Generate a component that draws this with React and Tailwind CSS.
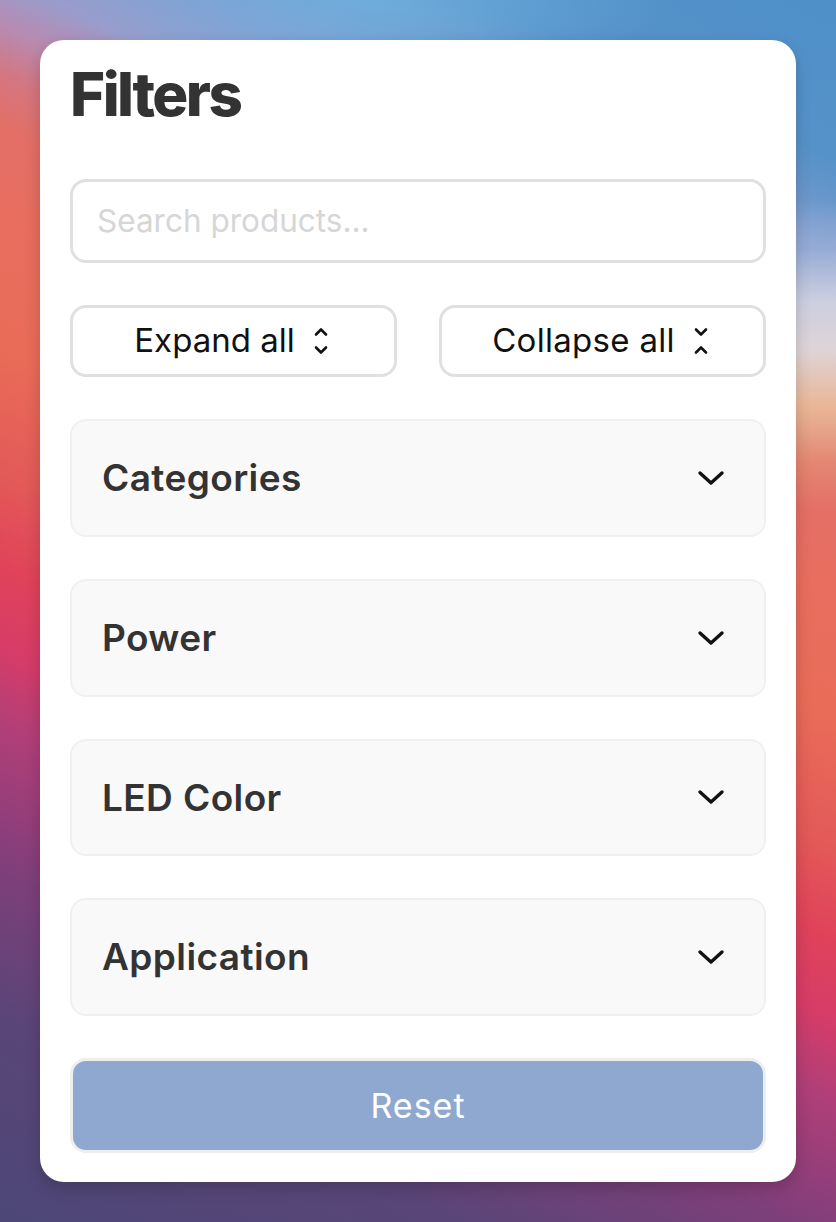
import React from "react";

function UpDown() {
  return (
    <svg width="24" height="30" viewBox="0 0 24 30" fill="none" stroke="#111" strokeWidth="2.6" strokeLinecap="round" strokeLinejoin="round">
      <path d="M7 8.5 L12 3.5 L17 8.5" />
      <path d="M7 21.5 L12 26.5 L17 21.5" />
    </svg>
  );
}

function DownUp() {
  return (
    <svg width="24" height="30" viewBox="0 0 24 30" fill="none" stroke="#111" strokeWidth="2.6" strokeLinecap="round" strokeLinejoin="round">
      <path d="M7 3.5 L12 8.5 L17 3.5" />
      <path d="M7 26.5 L12 21.5 L17 26.5" />
    </svg>
  );
}

function ChevronDown() {
  return (
    <svg width="28" height="18" viewBox="0 0 28 18" fill="none" stroke="#111" strokeWidth="3.4" strokeLinecap="round" strokeLinejoin="round">
      <path d="M3 4 L14 14 L25 4" />
    </svg>
  );
}

function Item({ label }) {
  return (
    <div className="mt-[42px] h-[118px] flex items-center justify-between bg-[#f9f9f9] border-2 border-[#f0f0f0] rounded-[16px] pl-[30px] pr-[39px]">
      <span className="text-[37px] font-semibold text-[#333333] tracking-[0.4px]">{label}</span>
      <ChevronDown />
    </div>
  );
}

export default function App() {
  return (
    <div
      className="w-[836px] h-[1222px] pt-[40px] px-[40px] font-['Inter',sans-serif]"
      style={{
        background: [
          "radial-gradient(ellipse 300px 90px at 370px 0px, rgba(112,178,224,0.8), rgba(112,178,224,0) 100%)",
          "linear-gradient(180deg, rgba(150,170,214,0) 200px, rgba(160,178,216,0.7) 250px, rgba(204,206,224,1) 300px, rgba(222,212,214,1) 350px, rgba(234,180,146,1) 410px, rgba(234,150,112,0.6) 460px, rgba(234,130,96,0) 510px) right top / 240px 100% no-repeat",
          "linear-gradient(204deg, #4f90c8 0%, #5592c8 10%, #7e9ccf 16%, #9a9ccc 22%, #b88ab0 25%, #d47680 28%, #e27068 31%, #e86e60 36%, #e96c58 45%, #e35a58 53%, #e0425a 59%, #d63c68 64%, #b03f78 69%, #953e7a 74%, #7d3f7a 78%, #5a4578 87%, #4c4777 100%)",
        ].join(", "),
      }}
    >
      <div className="w-[756px] h-[1142px] bg-white rounded-[24px] shadow-[0_6px_16px_rgba(0,0,0,0.18)] px-[30px] pt-[24px] pb-[29px] flex flex-col">
        <h1 className="text-[60px] leading-[60px] font-extrabold text-[#333333] tracking-[-2.5px]">Filters</h1>

        <div className="mt-[55px] h-[84px] border-[3px] border-[#e0e0e0] rounded-[16px] flex items-center pl-[24px]">
          <span className="text-[31.5px] text-[#d6d6d6]">Search products...</span>
        </div>

        <div className="mt-[42px] grid grid-cols-2 gap-[42px]">
          <button className="h-[72px] border-[3px] border-[#e0e0e0] rounded-[16px] flex items-center justify-center gap-[14px] bg-white">
            <span className="text-[33px] text-[#111111]">Expand all</span>
            <UpDown />
          </button>
          <button className="h-[72px] border-[3px] border-[#e0e0e0] rounded-[16px] flex items-center justify-center gap-[14px] bg-white">
            <span className="text-[33px] text-[#111111] tracking-[0.3px]">Collapse all</span>
            <DownUp />
          </button>
        </div>

        <Item label="Categories" />
        <Item label="Power" />
        <Item label="LED Color" />
        <Item label="Application" />

        <button className="mt-[42px] h-[95px] border-[3px] border-[#eeeeee] rounded-[16px] bg-[#8fa8d0] flex items-center justify-center">
          <span className="text-[34px] text-white tracking-[1px]">Reset</span>
        </button>
      </div>
    </div>
  );
}
